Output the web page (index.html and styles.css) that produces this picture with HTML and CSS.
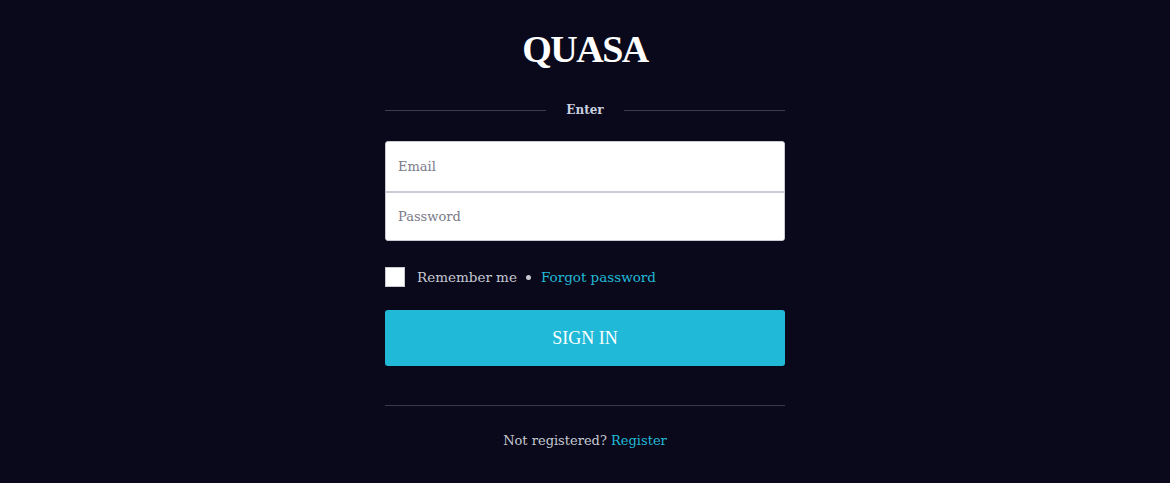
FILE: index.html
```html
<!DOCTYPE html>
<html>
<head>
<meta charset="utf-8">
<link rel="stylesheet" href="styles.css">
</head>
<body>
<main class="auth">
  <h1 class="logo">QUASA</h1>
  <div class="divider"><span>Enter</span></div>
  <form class="form">
    <div class="fields">
      <input class="field" type="email" placeholder="Email">
      <input class="field" type="password" placeholder="Password">
    </div>
    <div class="options">
      <label class="remember"><span class="box"></span>Remember me</label>
      <span class="dot"></span>
      <a class="link" href="#">Forgot password</a>
    </div>
    <button class="submit" type="button">SIGN IN</button>
  </form>
  <hr class="rule">
  <p class="register">Not registered? <a class="link" href="#">Register</a></p>
</main>
</body>
</html>
```
FILE: styles.css
```css
html, body {
  margin: 0;
  padding: 0;
  background: #09091b;
  font-family: "DejaVu Serif", "Liberation Serif", serif;
}
.auth {
  width: 400px;
  margin: 0 auto;
  padding-top: 26px;
}
.logo {
  margin: 0;
  text-align: center;
  color: #ffffff;
  font-family: "Liberation Serif", serif;
  font-size: 38px;
  letter-spacing: -1.5px;
  line-height: 46px;
  font-weight: bold;
}
.divider {
  display: flex;
  align-items: center;
  margin-top: 30px;
  color: #c9d1e0;
  font-size: 12px;
  font-weight: bold;
  line-height: 16px;
}
.divider::before, .divider::after {
  content: "";
  flex: 1;
  height: 1px;
  background: #3c3c50;
}
.divider span {
  padding: 0 20px;
}
.form {
  margin-top: 23px;
}
.fields {
  background: #fff;
  border-radius: 3px;
  overflow: hidden;
  border: 1px solid #c9c9d2;
  box-sizing: border-box;
}
.field {
  display: block;
  width: 100%;
  box-sizing: border-box;
  height: 49px;
  border: none;
  padding: 0 12px;
  font-family: inherit;
  font-size: 13px;
  color: #333;
  background: #fff;
  outline: none;
}
.field + .field {
  border-top: 2px solid #cbcbd4;
}
.field::placeholder {
  color: #7a7a88;
}
.options {
  display: flex;
  align-items: center;
  margin-top: 26px;
  font-size: 13.5px;
  color: #c6c9d2;
}
.remember {
  display: flex;
  align-items: center;
}
.box {
  width: 18px;
  height: 18px;
  background: #fff;
  border: 1px solid #c9c9d2;
  margin-right: 12px;
}
.dot {
  width: 5px;
  height: 5px;
  border-radius: 50%;
  background: #c6c9d2;
  margin: 0 10px 0 9px;
}
.link {
  color: #22b8d6;
  text-decoration: none;
}
.submit {
  display: block;
  width: 100%;
  height: 56px;
  margin-top: 23px;
  border: none;
  border-radius: 3px;
  background: #20bad8;
  color: #fff;
  font-family: "Liberation Serif", serif;
  font-size: 18px;
}
.rule {
  margin: 39px 0 0;
  border: none;
  height: 1px;
  background: #3a3a4e;
}
.register {
  margin: 27px 0 0;
  text-align: center;
  color: #c6c9d2;
  font-size: 13px;
}
```
